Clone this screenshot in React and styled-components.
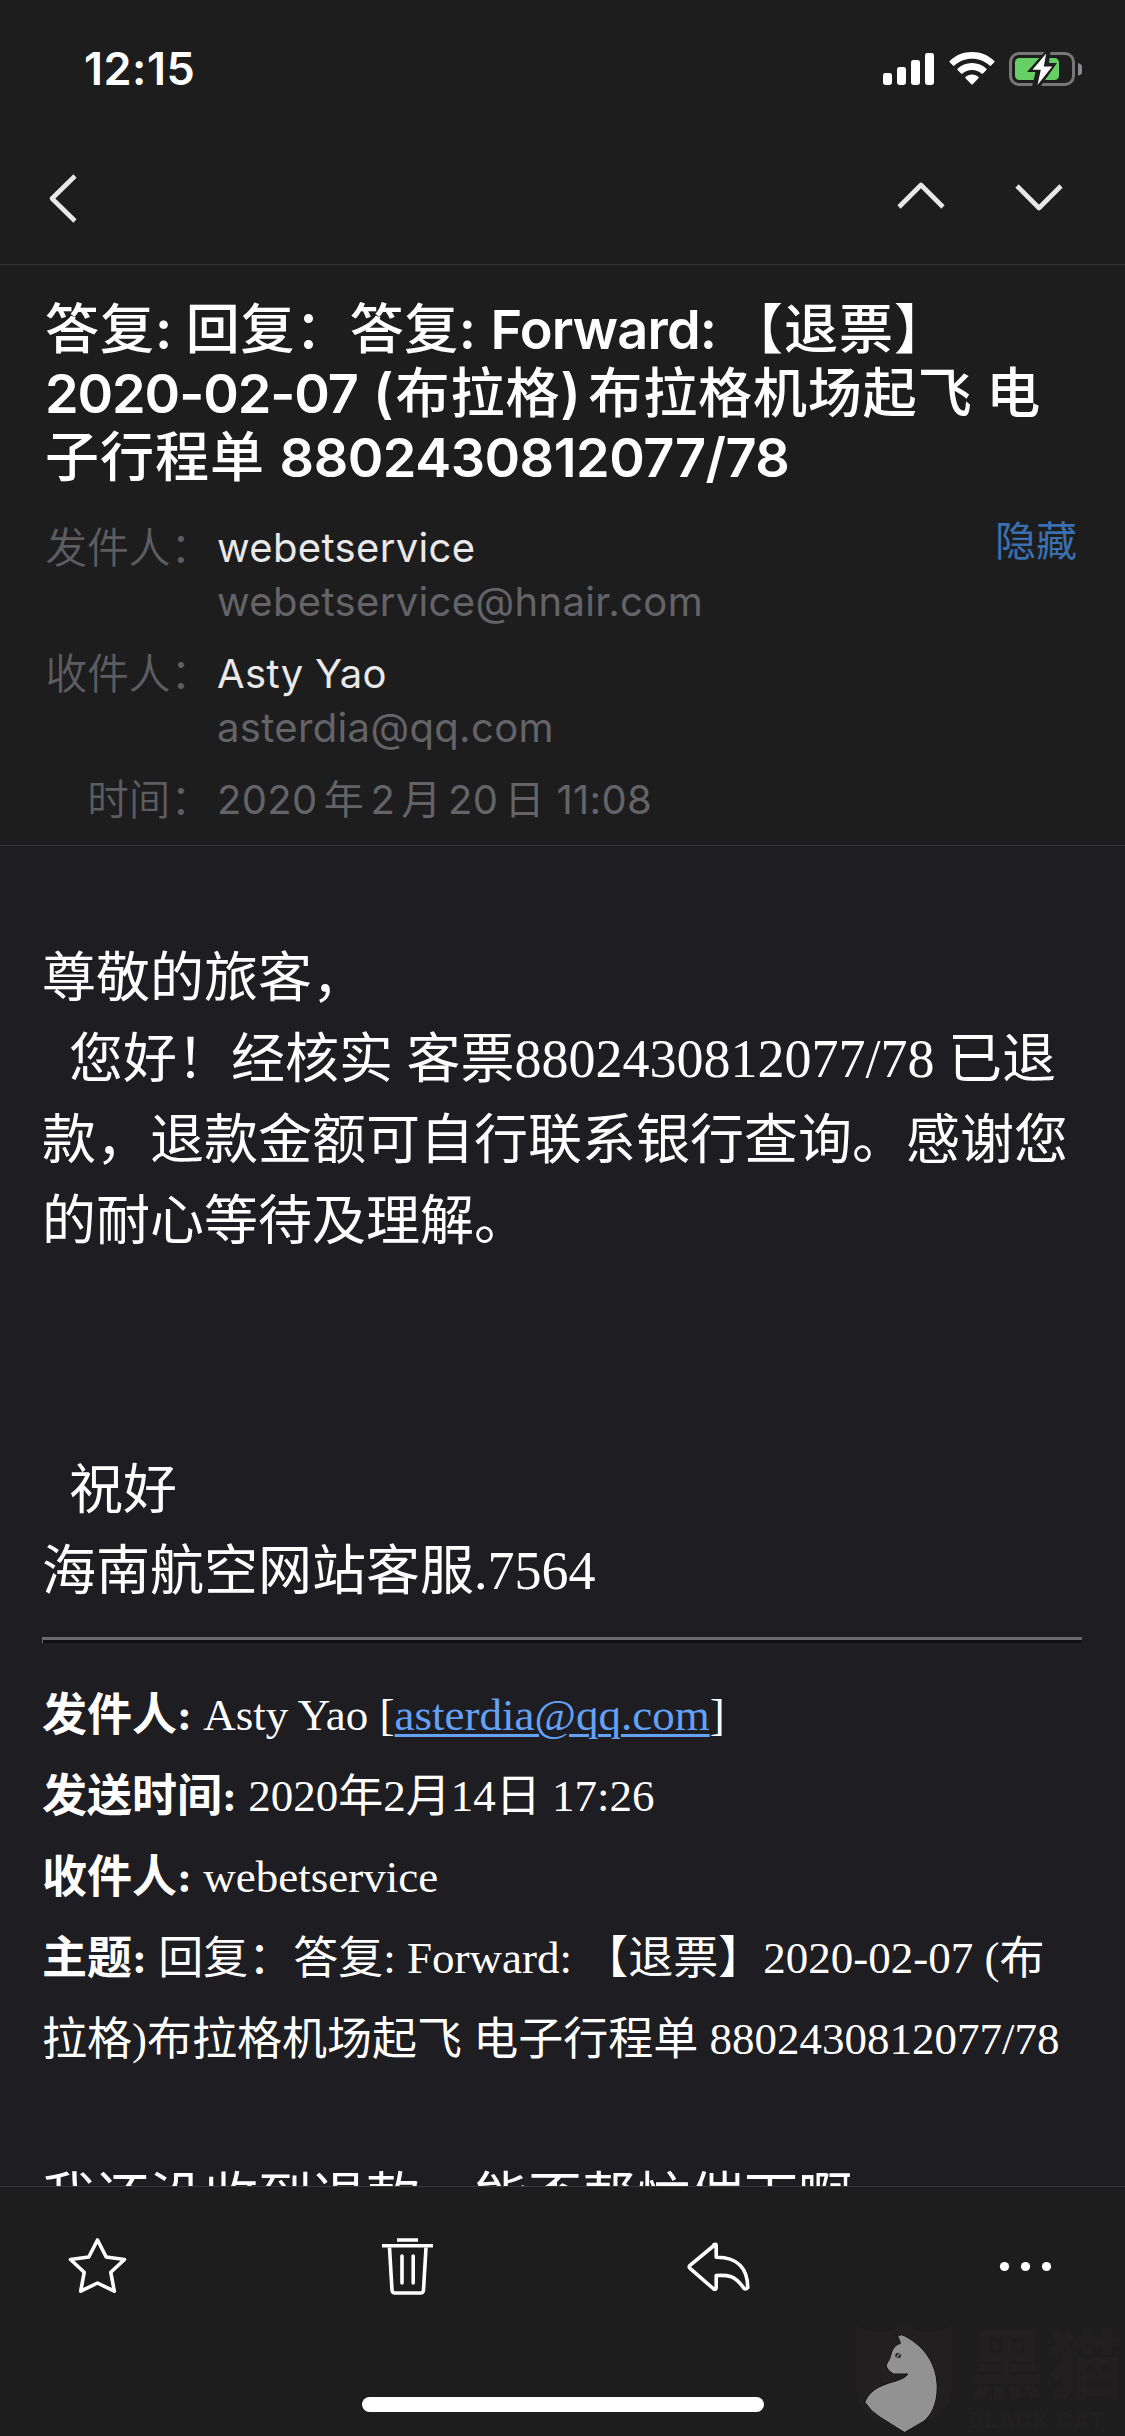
import React from 'react';
import styled, { createGlobalStyle } from 'styled-components';

const sans = `Inter, "Noto Sans CJK SC", sans-serif`;
const serif = `"Liberation Serif", "Noto Sans CJK SC", serif`;

const GlobalStyle = createGlobalStyle`
  body { margin: 0; background: #1d1d1e; }
  *, *::before, *::after { box-sizing: border-box; }
`;

const Screen = styled.div`
  position: relative;
  display: flex;
  flex-direction: column;
  width: 1125px;
  height: 2436px;
  overflow: hidden;
  background: #1d1d1e;
  color: #fff;
  font-family: ${sans};
`;

const StatusBar = styled.header`
  display: flex;
  justify-content: space-between;
  align-items: center;
  height: 138px;
  padding: 0 43px 0 84px;
`;

const Clock = styled.time`
  font-size: 45px;
  line-height: 54px;
  font-weight: 600;
  letter-spacing: 0.5px;
`;

const StatusIcons = styled.div`
  display: flex;
  align-items: center;
  gap: 14px;
`;

const NavBar = styled.nav`
  display: flex;
  justify-content: space-between;
  align-items: center;
  height: 127px;
  padding: 0 56px 6px 44px;
  border-bottom: 1px solid #333335;
`;

const NavGroup = styled.div`
  display: flex;
  gap: 58px;
`;

const IconButton = styled.button`
  display: flex;
  padding: 0;
  border: 0;
  background: none;
  color: #fff;
`;

const MailHead = styled.section`
  height: 581px;
  padding: 33px 44px 0 45px;
  border-bottom: 1px solid #39393b;
`;

const Subject = styled.h1`
  margin: 0;
  font-size: 54px;
  line-height: 64px;
  font-weight: 600;
`;

const Row = styled.div`
  white-space: pre;
`;

const Run = styled.span`
  letter-spacing: ${(p) => p.$track || 0}px;
`;

const Cjk = styled.span`
  font-weight: 500;
  letter-spacing: ${(p) => p.$track || 0}px;
`;

const MetaList = styled.dl`
  display: grid;
  grid-template-columns: 172px 1fr auto;
  row-gap: 18px;
  margin: 31px 0 0;
  font-size: 40px;
  line-height: 54px;
`;

const MetaLabel = styled.dt`
  color: #5d5d61;
  font-size: 41.6px;
  font-weight: 350;
  text-align: right;
  padding-right: 5px;
  white-space: nowrap;
`;

const MetaValue = styled.dd`
  margin: 0;
  white-space: pre;
  letter-spacing: 0.35px;
`;

const Name = styled.div`
  color: #e9e9ea;
`;

const Faint = styled.div`
  color: #646468;
`;

const DateText = styled.span`
  word-spacing: -5.4px;
`;

const HideLink = styled.a`
  margin-top: -7px;
  margin-right: 4px;
  color: #3a70b0;
  font-size: 41px;
`;

const MailBody = styled.main`
  flex: none;
  height: 1340px;
  overflow: hidden;
  padding: 92px 43px 0 42px;
  background: #1e1d21;
  font-family: ${serif};
  font-size: 54px;
  line-height: 81px;
`;

const Paragraph = styled.div`
  margin-top: ${(p) => p.$gap || 0}px;
  white-space: pre;
`;

const Hanzi = styled.span`
  line-height: 1;
  vertical-align: -1px;
`;

const Rule = styled.hr`
  height: 6px;
  margin: 25px 0 32px;
  border: 0;
  border-top: 3px solid #6b696c;
  border-left: 1px solid #6b696c;
  background: #111112;
`;

const Quote = styled.div`
  font-size: 45px;
  white-space: pre;
`;

const Field = styled.b`
  font-weight: 700;
`;

const MailLink = styled.a`
  color: #64a2f8;
  text-decoration: underline;
  text-decoration-thickness: 3px;
  text-underline-offset: 4px;
`;

const ToolBar = styled.footer`
  display: flex;
  justify-content: space-between;
  height: 250px;
  padding: 39px 59px 0 57px;
  border-top: 1px solid #39393c;
`;

const HomeIndicator = styled.div`
  position: absolute;
  left: 362px;
  bottom: 24px;
  width: 402px;
  height: 15px;
  border-radius: 8px;
  background: #fff;
`;

const Watermark = styled.div`
  position: absolute;
  left: 850px;
  bottom: 0;
  display: flex;
  width: 275px;
  height: 120px;
  overflow: hidden;
`;

const Brand = styled.div`
  display: flex;
  flex-direction: column;
  margin-left: 9px;
  color: #211f20;
  white-space: nowrap;
`;

const BrandName = styled.div`
  font-size: 76px;
  line-height: 76px;
  font-weight: 900;
  margin-top: 11px;
  letter-spacing: 2px;
`;

const BrandLatin = styled.div`
  margin-top: 5px;
  font-size: 22px;
  line-height: 24px;
  font-weight: 800;
  letter-spacing: 1.2px;
`;

function Mixed({ children }) {
  const parts = children.split(/([\u3000-\u9fff\uff00-\uffef]+)/);
  return parts.map((part, i) => (i % 2 ? <Hanzi key={i}>{part}</Hanzi> : part));
}

function Signal() {
  return (
    <svg width="52" height="34" viewBox="0 0 52 34" fill="#fff">
      <rect x="0" y="21" width="9" height="12" rx="2.4" />
      <rect x="14" y="15" width="9" height="18" rx="2.4" />
      <rect x="28" y="8" width="9" height="25" rx="2.4" />
      <rect x="42" y="1" width="9" height="32" rx="2.4" />
    </svg>
  );
}

function Wifi() {
  return (
    <svg width="46" height="34" viewBox="0 0 46 34" fill="#fff">
      <path d="M23 0C14.3 0 6.5 3.3.7 8.9c-.4.4-.4 1 0 1.4l3.3 3.3c.4.4 1 .4 1.4 0C10 9.3 16.2 6.7 23 6.7s13 2.6 17.6 6.9c.4.4 1 .4 1.4 0l3.3-3.3c.4-.4.4-1 0-1.4C39.5 3.3 31.7 0 23 0z" />
      <path d="M23 11c-5.7 0-10.7 2.2-14.4 5.7-.4.4-.4 1 0 1.4l3.5 3.4c.4.4 1 .4 1.4 0 2.5-2.3 5.8-3.6 9.5-3.6s7 1.3 9.5 3.6c.4.4 1 .4 1.4 0l3.5-3.4c.4-.4.4-1 0-1.4C33.7 13.2 28.7 11 23 11z" />
      <path d="M23 22.5c-2.6 0-4.9 1-6.500 2.500-.4.4-.4.9 0 1.300l5.800 6c.4.4 1 .4 1.400 0l5.800-6c.4-.4.4-.9 0-1.300-1.600-1.500-3.900-2.500-6.500-2.500z" />
    </svg>
  );
}

function Battery() {
  return (
    <svg width="73" height="36" viewBox="0 0 73 36">
      <rect x="1.5" y="2.5" width="63" height="31" rx="8.5" fill="none" stroke="#77777a" strokeWidth="3" />
      <path d="M69 12a6.600 6.600 0 0 1 0 12.800z" fill="#8a8a8c" />
      <rect x="6" y="7" width="44" height="22" rx="4.5" fill="#66cf65" />
      <path d="M36 .5 18 21h8.500l-3.500 14.500h8.500L48 12h-8L41.500 .5z" fill="#1d1d1e" />
      <path d="M37.200 2.500 23.500 18.800h8.300L28.500 34 43.200 15.500h-8.400z" fill="#fff" />
    </svg>
  );
}

function Chevron({ width, height, points }) {
  return (
    <svg width={width} height={height} viewBox={`0 0 ${width} ${height}`} fill="none" stroke="#e8e8e8" strokeWidth="4.6" strokeLinejoin="round">
      <polyline points={points} />
    </svg>
  );
}

function ToolIcon({ children }) {
  return (
    <IconButton>
      <svg width="80" height="80" viewBox="0 0 80 80" fill="none" stroke="#fff" strokeWidth="3.6" strokeLinejoin="round">
        {children}
      </svg>
    </IconButton>
  );
}

function Star() {
  return (
    <ToolIcon>
      <path d="M40.500 14 L49.200 31 L67.500 33.500 L53.800 46.300 L57.300 65.200 L40.500 57 L23.700 65.200 L27.200 46.300 L13.500 33.500 L31.800 31 Z" />
    </ToolIcon>
  );
}

function Trash() {
  return (
    <ToolIcon>
      <path d="M30 14h21M15 19.800h51" />
      <path d="M22.500 21.500 25 64q.2 3 3 3h25.500q2.800 0 3-3L59 21.500" />
      <path d="M35 30v27M46.200 30v27" strokeLinecap="round" />
    </ToolIcon>
  );
}

function Reply() {
  return (
    <ToolIcon>
      <path d="M39.200 18.500 14 39.300Q12.500 40.800 14 42.300L37.800 63Q40 64 40.200 61.500V49.500C51 49 58 48.500 67 61Q69 64.500 71.800 61.500C71.500 43 62 31 40.200 31.300V19.500Q40.200 17.500 38 18.700Z" />
    </ToolIcon>
  );
}

function More() {
  return (
    <ToolIcon>
      <g fill="#fff" stroke="none">
        <circle cx="18.500" cy="40.500" r="4.600" />
        <circle cx="39.500" cy="40.500" r="4.600" />
        <circle cx="60.500" cy="40.500" r="4.600" />
      </g>
    </ToolIcon>
  );
}

function CatShield() {
  return (
    <svg width="111" height="120" viewBox="0 0 111 120">
      <path d="M6 8C21 20 42 18 55 5C68 18 88 20 103 8V74C103 92 88 104 55 117C22 104 6 92 6 74Z" fill="#221f20" />
      <path
        d="M47.500 18 50.500 19.500 51 18 55 19.500C77 31 88 50 88 72C88 88 82 100 74 106L55 117L31 102Q21 96 15 86.500C20 72 36 68 48 64.500Q56 62 58.500 58H44Q37 54 36.500 49Q41 42 42 36Q44 29 51 27Z"
        fill="#929292"
        stroke="#111"
        strokeWidth="1"
      />
      <ellipse cx="48.500" cy="39.300" rx="2.800" ry="2.600" fill="#1b1b1b" />
      <path d="M47 41.500 50 37.500" stroke="#929292" strokeWidth="1.400" />
    </svg>
  );
}

export default function App() {
  return (
    <Screen>
      <GlobalStyle />
      <StatusBar>
        <Clock>12:15</Clock>
        <StatusIcons>
          <Signal />
          <Wifi />
          <Battery />
        </StatusIcons>
      </StatusBar>
      <NavBar>
        <IconButton aria-label="back">
          <Chevron width={40} height={60} points="31,8 8,30.5 31,53" />
        </IconButton>
        <NavGroup>
          <IconButton aria-label="previous">
            <Chevron width={60} height={60} points="8,39 30,17 52,39" />
          </IconButton>
          <IconButton aria-label="next">
            <Chevron width={60} height={60} points="8,18 30,40 52,18" />
          </IconButton>
        </NavGroup>
      </NavBar>

      <MailHead>
        <Subject>
          <Row>
            <Cjk $track={1}>答复</Cjk>: <Cjk $track={0.6}>回复：答复</Cjk>
            <Run $track={0.4}>: </Run>
            <Run $track={-0.8}>Forward: </Run>
            <Cjk $track={1}>【退票】</Cjk>
          </Row>
          <Row>
            <Run $track={-1.1}>2020-02-07</Run>
            <Run $track={2}> (</Run>
            <Cjk $track={1}>布拉格</Cjk>
            <Run $track={-3}>) </Run>
            <Cjk $track={0.9}>布拉格机场起飞</Cjk> <Cjk>电</Cjk>
          </Row>
          <Row>
            <Cjk $track={1}>子行程单</Cjk>
            <Run $track={1}> </Run>
            <Run $track={-0.5}>8802430812077/78</Run>
          </Row>
        </Subject>
        <MetaList>
          <MetaLabel>发件人：</MetaLabel>
          <MetaValue>
            <Name>webetservice</Name>
            <Faint>webetservice@hnair.com</Faint>
          </MetaValue>
          <HideLink>隐藏</HideLink>
          <MetaLabel>收件人：</MetaLabel>
          <MetaValue>
            <Name>Asty Yao</Name>
            <Faint>asterdia@qq.com</Faint>
          </MetaValue>
          <span />
          <MetaLabel>时间：</MetaLabel>
          <MetaValue>
            <Faint>
              <DateText>2020 年 2 月 20 日</DateText> 11:08
            </Faint>
          </MetaValue>
        </MetaList>
      </MailHead>

      <MailBody lang="zh-CN">
        <Paragraph>
          <Row><Mixed>尊敬的旅客，</Mixed></Row>
          <Row><Mixed>{'  您好！经核实 客票8802430812077/78 已退'}</Mixed></Row>
          <Row><Mixed>款，退款金额可自行联系银行查询。感谢您</Mixed></Row>
          <Row><Mixed>的耐心等待及理解。</Mixed></Row>
        </Paragraph>
        <Paragraph $gap={188}>
          <Row><Mixed>{'  祝好'}</Mixed></Row>
          <Row><Mixed>海南航空网站客服.7564</Mixed></Row>
        </Paragraph>
        <Rule />
        <Quote>
          <Row>
            <Field><Mixed>发件人:</Mixed></Field> Asty Yao [<MailLink>asterdia@qq.com</MailLink>]
          </Row>
          <Row>
            <Field><Mixed>发送时间:</Mixed></Field><Mixed> 2020年2月14日 17:26</Mixed>
          </Row>
          <Row>
            <Field><Mixed>收件人:</Mixed></Field> webetservice
          </Row>
          <Row>
            <Field><Mixed>主题:</Mixed></Field><Mixed> 回复：答复: Forward: 【退票】2020-02-07 (布</Mixed>
          </Row>
          <Row><Mixed>拉格)布拉格机场起飞 电子行程单 8802430812077/78</Mixed></Row>
        </Quote>
        <Paragraph $gap={78}>
          <Row><Mixed>我还没收到退款，能否帮忙催下啊</Mixed></Row>
        </Paragraph>
      </MailBody>

      <ToolBar>
        <Star />
        <Trash />
        <Reply />
        <More />
      </ToolBar>
      <Watermark>
        <CatShield />
        <Brand>
          <BrandName>黑猫</BrandName>
          <BrandLatin>BLACK CAT</BrandLatin>
        </Brand>
      </Watermark>
      <HomeIndicator />
    </Screen>
  );
}
